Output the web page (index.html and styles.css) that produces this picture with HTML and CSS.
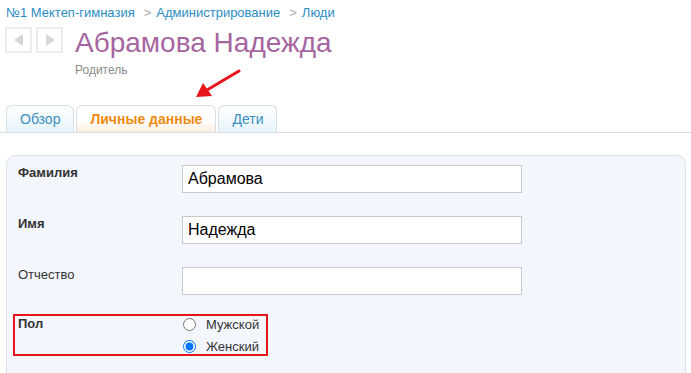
FILE: index.html
```html
<!DOCTYPE html>
<html lang="ru">
<head>
<meta charset="utf-8">
<title>Абрамова Надежда</title>
<link rel="stylesheet" href="styles.css">
</head>
<body>
<div class="page">
  <nav class="crumbs">
    <a href="#">№1 Мектеп-гимназия</a><span class="sep">&gt;</span><a href="#">Администрирование</a><span class="sep">&gt;</span><a href="#">Люди</a>
  </nav>
  <header class="head">
    <div class="navbtns">
      <span class="navbtn"><svg width="10" height="12" viewBox="0 0 10 12"><path d="M9 0 L9 12 L0 6 Z" fill="#d6d6d6"/></svg></span>
      <span class="navbtn"><svg width="10" height="12" viewBox="0 0 10 12"><path d="M1 0 L1 12 L10 6 Z" fill="#d6d6d6"/></svg></span>
    </div>
    <div class="titles">
      <h1 class="title">Абрамова Надежда</h1>
      <div class="role">Родитель</div>
    </div>
  </header>
  <div class="tabs-wrap">
    <svg class="arrow" width="56" height="38" viewBox="0 0 56 38">
      <line x1="48" y1="4" x2="16" y2="23" stroke="#e8141b" stroke-width="3" stroke-linecap="round"/>
      <path d="M5 30 L12 16 L21 29 Z" fill="#e8141b"/>
    </svg>
    <ul class="tabs">
      <li class="tab">Обзор</li>
      <li class="tab active">Личные данные</li>
      <li class="tab">Дети</li>
    </ul>
  </div>
  <section class="panel">
    <div class="row">
      <label class="lbl bold">Фамилия</label>
      <input class="field" type="text" value="Абрамова">
    </div>
    <div class="row">
      <label class="lbl bold">Имя</label>
      <input class="field" type="text" value="Надежда">
    </div>
    <div class="row">
      <label class="lbl">Отчество</label>
      <input class="field" type="text" value="">
    </div>
    <div class="row highlight">
      <label class="lbl bold">Пол</label>
      <div class="radios">
        <label class="radio"><input type="radio" name="sex"><span>Мужской</span></label>
        <label class="radio"><input type="radio" name="sex" checked><span>Женский</span></label>
      </div>
    </div>
  </section>
</div>
</body>
</html>
```

FILE: styles.css
```css
* { box-sizing: border-box; }
html, body { margin: 0; padding: 0; background: #fff; }
body {
  font-family: Arial, "Liberation Sans", sans-serif;
  color: #333;
  overflow: hidden;
}
.page { width: 691px; }

.crumbs {
  padding: 5px 6px 0;
  font-size: 13px;
  line-height: 16px;
  height: 21px;
}
.crumbs a { color: #2b8cc4; text-decoration: none; }
.crumbs .sep { color: #a9a9a9; margin: 0 5px 0 9px; }

.head {
  display: flex;
  align-items: flex-start;
  margin-top: 6px;
  padding-left: 5px;
}
.navbtns { display: flex; gap: 4px; margin-top: 0; }
.navbtn {
  width: 27px;
  height: 26px;
  border: 2px solid #ececec;
  background: #fff;
  display: flex;
  align-items: center;
  justify-content: center;
}
.titles { margin-left: 12px; }
.title {
  margin: 0;
  font-size: 28px;
  line-height: 32px;
  font-weight: normal;
  color: #a6659f;
}
.role {
  margin-top: 4px;
  font-size: 12px;
  line-height: 14px;
  color: #8a8a8a;
}

.tabs-wrap { position: relative; margin-top: 28px; }
.arrow { position: absolute; left: 191px; top: -38px; }
.tabs {
  list-style: none;
  margin: 0;
  padding: 0 0 0 6px;
  display: flex;
  gap: 2px;
  border-bottom: 1px solid #d5dfe5;
}
.tab {
  border: 1px solid #d5dfe5;
  border-bottom: none;
  border-radius: 6px 6px 0 0;
  padding: 5px 13px;
  font-size: 14px;
  line-height: 16px;
  color: #3a8fc2;
  background: linear-gradient(#ffffff, #e6f4fa);
}
.tab.active {
  color: #ee8a0e;
  font-weight: bold;
  background: linear-gradient(#ffffff 55%, #fdeedf);
}

.panel {
  margin: 22px 5px 0 6px;
  border: 1px solid #dbe2e9;
  border-radius: 9px;
  background: #f3f6fd;
  padding: 9px 11px 40px;
}
.row {
  display: grid;
  grid-template-columns: 164px 340px;
  margin-bottom: 23px;
}
.lbl {
  font-size: 13px;
  line-height: 16px;
  color: #333;
}
.lbl.bold { font-weight: bold; }
.field {
  width: 340px;
  height: 28px;
  border: 1px solid #c9c9c9;
  background: #fff;
  padding: 0 5px;
  font-family: Arial, "Liberation Sans", sans-serif;
  font-size: 16px;
  color: #000;
  outline: none;
}
.row.highlight {
  width: 255px;
  height: 42px;
  grid-template-columns: 162px auto;
  margin: -4px 0 0 -5px;
  border: 2px solid #e8141b;
  padding: 0 0 0 3px;
}
.radios { display: flex; flex-direction: column; margin-top: -3px; }
.radio {
  display: flex;
  align-items: center;
  height: 22px;
  font-size: 13px;
  color: #333;
}
.radio input {
  margin: 0 10px 0 3px;
  width: 13px;
  height: 13px;
}
```
